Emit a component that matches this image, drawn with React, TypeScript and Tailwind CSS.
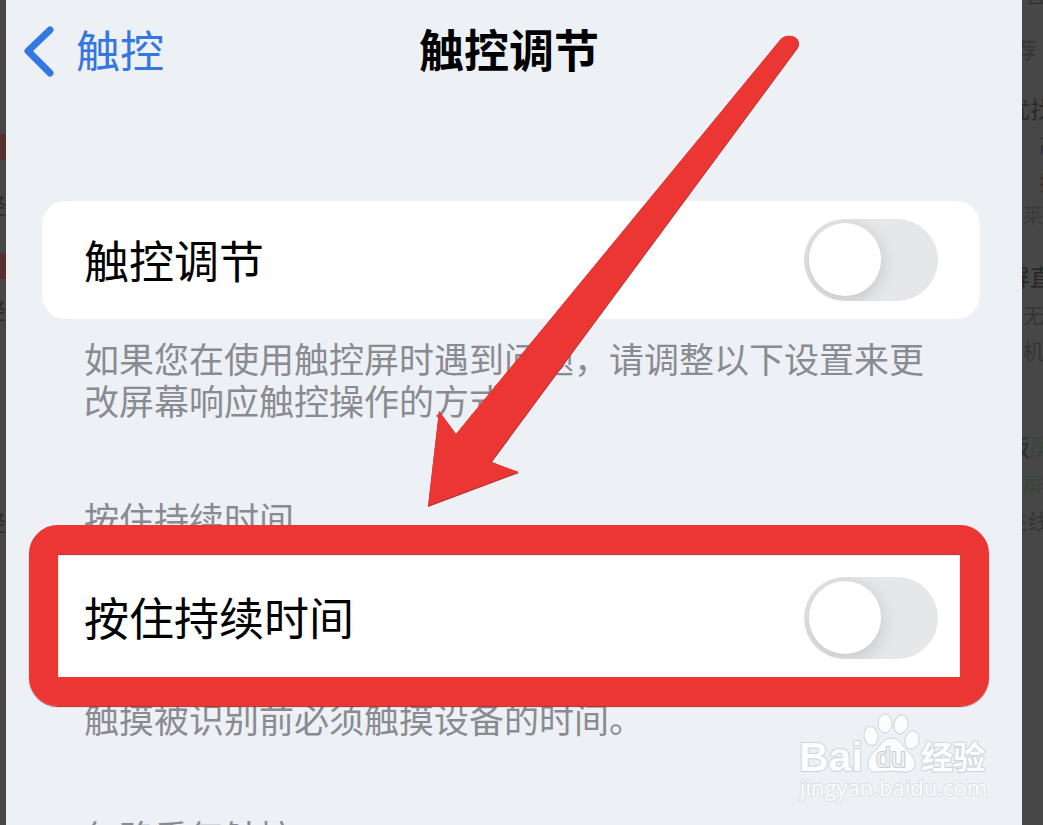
import { useId } from "react";

function ToggleRow({ label, className }: { label: string; className: string }) {
  const id = useId();
  return (
    <div className={`flex items-center justify-between bg-white pl-[42px] pr-[42px] ${className}`}>
      <label htmlFor={id} className="pt-[5px] text-[45px] leading-[60px] font-normal text-black">
        {label}
      </label>
      <span className="relative flex h-[82px] w-[134px] shrink-0">
        <input
          id={id}
          type="checkbox"
          role="switch"
          className="peer h-full w-full cursor-pointer appearance-none rounded-full bg-[#e6e7e9] checked:bg-[#34c759]"
        />
        <span className="pointer-events-none absolute inset-0 overflow-hidden rounded-full peer-checked:pl-[52px]">
          <span className="mt-1 ml-[5px] block h-[73px] w-[72px] rounded-full bg-white shadow-[0_4px_16px_2px_rgba(0,0,0,0.13)]" />
        </span>
      </span>
    </div>
  );
}

function Watermark() {
  return (
    <svg
      viewBox="0 0 200 100"
      className="absolute right-[28px] bottom-[15px] h-[100px] w-[200px]"
      stroke="#cfd3d6"
      strokeWidth="2"
      strokeLinejoin="round"
      fill="#fcfdfe"
      aria-label="Baidu 经验"
    >
      <text x="5" y="61" fontSize="41" fontWeight="700" fontFamily="Liberation Sans, sans-serif" paintOrder="stroke">
        Bai
      </text>
      <g strokeWidth="1">
        <ellipse cx="77" cy="26" rx="7" ry="9.5" transform="rotate(-8 77 26)" />
        <ellipse cx="91" cy="13.5" rx="7" ry="9.5" />
        <ellipse cx="107" cy="14.5" rx="7" ry="9.5" transform="rotate(10 107 14.5)" />
        <ellipse cx="118" cy="30" rx="7" ry="9" transform="rotate(15 118 30)" />
        <path d="M97 28C90 28 87 34 83 39C79 43 74 47 74 54C74 60 78 63 85 62C92 61 102 61 109 62C116 63 121 59 121 54C121 47 115 43 111 38C107 33 104 28 97 28Z" />
      </g>
      <text x="82" y="57" fontSize="27" fontWeight="400" fontFamily="Liberation Sans, sans-serif" fill="#eef1f4" stroke="#c6cacd" strokeWidth="2" paintOrder="stroke">
        du
      </text>
      <text x="127" y="59" fontSize="32" fontWeight="700" fontFamily="Noto Sans CJK SC, sans-serif" paintOrder="stroke">
        经验
      </text>
      <text x="6" y="86" fontSize="22" fontFamily="Open Sans, sans-serif" stroke="#dbdfe2" paintOrder="stroke">
        jingyan.baidu.com
      </text>
    </svg>
  );
}

function Arrow() {
  return (
    <svg
      viewBox="420 30 384 480"
      className="pointer-events-none absolute top-[30px] left-[414px] h-[480px] w-[384px]"
      aria-hidden="true"
    >
      <path
        d="M428 507L439 411L456 434L780 40C788 31 803 38 798 48L492 462L519 473Z"
        fill="#a92f30"
      />
      <path d="M428 506L439 411L456 434L780 40C788 31 803 38 798 47L491 462L519 472Z" fill="#eb3633" />
    </svg>
  );
}

const rightLines = [
  { text: "直", style: "h-[34px] -mt-4 pl-1 text-[20px] leading-[24px] text-[#303030]" },
  { text: "荐", style: "h-[60px] mt-4 -ml-[7px] text-[22px] leading-[32px] text-[#353535]" },
  { text: "优找", style: "h-[36px] -ml-[15px] text-[23px] leading-[32px] text-[#2b2b2b]" },
  { text: "高", style: "h-[38px] pl-[17px] text-[20px] leading-[32px] text-[#303030]" },
  { text: "拉", style: "h-[32px] pl-[17px] text-[20px] leading-[32px] text-[#303030]" },
  { text: "莱", style: "h-[62px] pl-[1px] text-[20px] leading-[32px] text-[#393939]" },
  { text: "屏直", style: "h-[38px] -ml-[15px] text-[23px] leading-[32px] text-[#252525]" },
  { text: "无", style: "h-[36px] pl-[1px] text-[21px] leading-[32px] text-[#353535]" },
  { text: "机", style: "h-[96px] pl-[1px] text-[21px] leading-[32px] text-[#353535]" },
];

function RightBackdrop() {
  return (
    <div className="w-[21px] shrink-0 overflow-hidden bg-[#474747] whitespace-nowrap">
      {rightLines.map((line) => (
        <p key={line.text} className={line.style}>
          {line.text}
        </p>
      ))}
      <p className="-ml-[15px] h-[37px] text-[23px] leading-[32px] text-[#2b2b2b]">
        板<span className="text-[#384638]">屏</span>
      </p>
      <p className="h-[37px] pl-[1px] text-[21px] leading-[32px] text-[#384638]">屏</p>
      <p className="-ml-[15px] text-[21px] leading-[32px] text-[#353535]">在线</p>
    </div>
  );
}

function LeftBackdrop() {
  return (
    <div className="w-[6px] shrink-0 overflow-hidden bg-[#474747] text-[22px] leading-[32px] text-[#2b2b2b]">
      <div className="mt-[134px] h-[26px] bg-[#55302f]" />
      <p className="mt-[30px] -ml-4 h-[32px] w-8">经</p>
      <div className="mt-[31px] h-[26px] bg-[#55302f]" />
      <p className="mt-[16px] -ml-4 h-[32px] w-8">经</p>
      <p className="mt-[180px] -ml-4 h-[32px] w-8">经</p>
    </div>
  );
}

const note = "px-[42px] text-[35px] leading-[42px] text-[#8a8b90]";

export default function App() {
  return (
    <div className="flex h-screen overflow-hidden font-['Inter','Noto_Sans_CJK_SC',sans-serif]">
      <LeftBackdrop />
      <main className="relative min-w-0 flex-1 overflow-hidden bg-[#edf1f5]">
        <header className="grid h-[104px] grid-cols-[1fr_auto_1fr] items-center pr-[26px] pl-4">
          <a href="#touch" className="flex items-center gap-[22px] text-[44px] leading-[60px] text-[#3477e2]">
            <svg viewBox="0 0 32 52" className="h-[52px] w-8" fill="none" aria-hidden="true">
              <path d="M28 4L6 25L28 47" stroke="currentColor" strokeWidth="7" strokeLinecap="round" strokeLinejoin="round" />
            </svg>
            触控
          </a>
          <h1 className="text-[45px] leading-[60px] font-bold text-black">触控调节</h1>
        </header>

        <div className="mt-[97px] pr-[42px] pl-[36px]">
          <section>
            <ToggleRow label="触控调节" className="h-[118px] rounded-[24px]" />
            <p className={`mt-5 ${note}`}>
              如果您在使用触控屏时遇到问题，请调整以下设置来更
              <br />
              改屏幕响应触控操作的方式。
            </p>
          </section>

          <section className="mt-[76px]">
            <h2 className={note}>按住持续时间</h2>
            <div className="relative mt-[13px]">
              <ToggleRow label="按住持续时间" className="h-[123px] pt-1" />
              <div className="pointer-events-none absolute -top-[29px] -right-[9px] -bottom-[29px] -left-[13px] rounded-[29px] border-[29px] border-[#eb3633] shadow-[0_1px_1px_#a92f30,inset_0_1px_1px_#a92f30]" />
            </div>
            <p className={`mt-[22px] ${note}`}>触摸被识别前必须触摸设备的时间。</p>
          </section>

          <section className="mt-[76px]">
            <h2 className={note}>忽略重复触控</h2>
          </section>
        </div>

        <Arrow />
        <Watermark />
      </main>
      <RightBackdrop />
    </div>
  );
}
